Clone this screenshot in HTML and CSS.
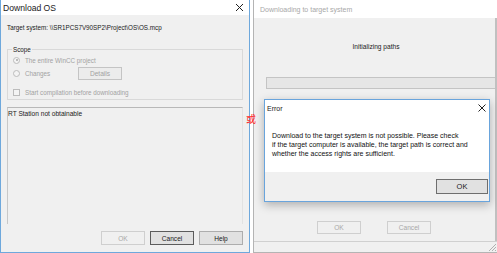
FILE: index.html
```html
<!DOCTYPE html>
<html>
<head>
<meta charset="utf-8">
<link rel="stylesheet" href="styles.css">
</head>
<body>
<div class="screen">
  <div class="dlg-left">
    <div class="titlebar">
      <span class="title">Download OS</span>
      <svg class="close" width="9" height="9" viewBox="0 0 9 9"><path d="M1 1L8 8M8 1L1 8" stroke="#222" stroke-width="1"/></svg>
    </div>
    <div class="left-body">
      <div class="target">Target system: \\SR1PCS7V90SP2\Project\OS\OS.mcp</div>
      <fieldset class="scope">
        <legend>Scope</legend>
        <div class="opt first"><span class="radio checked"></span><span>The entire WinCC project</span></div>
        <div class="opt changes"><span class="radio"></span><span class="lbl">Changes</span><span class="btn details">Details</span></div>
        <div class="opt check"><span class="box"></span><span>Start compilation before downloading</span></div>
      </fieldset>
      <div class="status">RT Station not obtainable</div>
      <div class="buttons">
        <span class="btn disabled">OK</span>
        <span class="btn default">Cancel</span>
        <span class="btn">Help</span>
      </div>
    </div>
  </div>
  <div class="dlg-right">
    <div class="titlebar grey">
      <span class="title">Downloading to target system</span>
    </div>
    <div class="right-body">
      <div class="init">Initializing paths</div>
      <div class="progress"></div>
      <div class="right-buttons">
        <span class="btn disabled">OK</span>
        <span class="btn disabled">Cancel</span>
      </div>
    </div>
    <div class="statusbar"><svg class="grip" width="10" height="10" viewBox="0 0 10 10"><path d="M9 2L2 9M9 5L5 9M9 8L8 9" stroke="#b0b0b0" stroke-width="1"/></svg></div>
  </div>
  <div class="err">
    <div class="err-title">
      <span>Error</span>
      <svg width="8" height="8" viewBox="0 0 8 8"><path d="M0.5 0.5L7.5 7.5M7.5 0.5L0.5 7.5" stroke="#222" stroke-width="1"/></svg>
    </div>
    <div class="err-msg">Download to the target system is not possible. Please check<br>if the target computer is available, the target path is correct and<br>whether the access rights are sufficient.</div>
    <div class="err-foot"><span class="btn okbtn">OK</span></div>
  </div>
  <div class="redmark">或</div>
</div>
</body>
</html>
```
FILE: styles.css
```css
html, body { margin: 0; padding: 0; background: #fff; }
body { font-family: "Liberation Sans", Arial, sans-serif; font-size: 6.3px; color: #1a1a1a; }
.screen { position: relative; width: 497px; height: 253px; display: flex; gap: 3px; overflow: hidden; }

.dlg-left { width: 250px; height: 253px; box-sizing: border-box; border: 1px solid #6ea8dc; border-top: none; background: #f0f0f0; display: flex; flex-direction: column; }
.titlebar { height: 15px; background: #fff; display: flex; align-items: center; justify-content: space-between; padding: 0 5px 0 2px; flex: none; }
.titlebar .title { font-size: 8.6px; color: #222; }
.left-body { padding: 0 6px; flex: 1; display: flex; flex-direction: column; }
.target { margin-top: 8px; height: 9px; line-height: 9px; }
.scope { margin: 14px 0 0 0; padding: 1px 0 1px 5px; border: 1px solid #d9d9d9; }
.scope legend { padding: 0 1px; margin-left: -1px; color: #222; line-height: 7px; height: 7px; }
.opt { display: flex; align-items: center; gap: 5px; color: #a2a2a2; height: 12px; }
.changes { height: 14px; }
.changes .lbl { width: 48px; }
.check { margin-top: 6px; }
.radio { width: 5px; height: 5px; border-radius: 50%; border: 1px solid #bcbcbc; background: #f4f4f4; position: relative; flex: none; }
.radio.checked::after { content: ""; position: absolute; left: 1.5px; top: 1.5px; width: 2px; height: 2px; border-radius: 50%; background: #a8a8a8; }
.box { width: 5px; height: 5px; border: 1px solid #bcbcbc; background: #f4f4f4; flex: none; }
.btn { display: inline-flex; align-items: center; justify-content: center; box-sizing: border-box; width: 44px; height: 14px; background: #e1e1e1; border: 1px solid #adadad; color: #1a1a1a; font-size: 6.6px; }
.details { color: #a2a2a2; border-color: #c4c4c4; background: #ececec; height: 13px; }
.status { margin-top: 7px; height: 117px; flex: none; border-top: 1px solid #b8b8b8; border-left: 1px solid #c8c8c8; border-right: 1px solid #e2e2e2; padding: 2px 0 0 0; box-sizing: border-box; color: #1a1a1a; font-size: 6.6px; }
.buttons { display: flex; justify-content: flex-end; gap: 5px; margin-top: 7px; }
.btn.disabled { background: #f0f0f0; border-color: #cfcfcf; color: #a8a8a8; }
.btn.default { border: 1px solid #5c5c5c; box-shadow: inset 0 0 0 1px #e1e1e1; }

.dlg-right { width: 244px; height: 253px; box-sizing: border-box; border: 1px solid #b4b4b4; border-top: none; border-right: none; background: #f0f0f0; display: flex; flex-direction: column; font-size: 6.6px; }
.titlebar.grey { height: 18px; padding-left: 6px; }
.titlebar.grey .title { color: #a8a8a8; font-size: 7px; }
.right-body { flex: 1; display: flex; flex-direction: column; border-right: 2px solid #c0c0c0; }
.init { text-align: center; margin: 25px 0 0 0; padding-left: 3px; font-size: 6.6px; }
.progress { margin: 27px 0 0 12px; height: 12px; box-sizing: border-box; border: 1px solid #c4c4c4; border-right: none; background: #e6e6e6; }
.right-buttons { display: flex; gap: 26px; margin: 132px 0 0 63px; }
.right-buttons .btn { height: 13px; }
.statusbar { height: 10px; border-top: 1px solid #d0d0d0; background: #f0f0f0; display: flex; justify-content: flex-end; align-items: flex-end; flex: none; }

.err { position: absolute; left: 264px; top: 99px; width: 226px; height: 103px; box-sizing: border-box; border: 1px solid #69a4dc; background: #fff; box-shadow: 0 3px 9px rgba(0,0,0,0.28); display: flex; flex-direction: column; }
.err-title { height: 16px; display: flex; justify-content: space-between; align-items: center; padding: 0 3px 0 2px; font-size: 7px; flex: none; }
.err-msg { padding: 15px 0 0 7px; line-height: 9px; height: 41px; flex: none; color: #111; font-size: 7px; white-space: nowrap; }
.err-foot { flex: 1; background: #f0f0f0; display: flex; justify-content: flex-end; align-items: center; padding-right: 1px; }
.okbtn { width: 52px; height: 15px; border-color: #6e6e6e; font-size: 7.5px; }

.redmark { position: absolute; left: 246px; top: 113px; color: #ff2a2a; font-family: "Noto Sans CJK SC", sans-serif; font-size: 10px; line-height: 11px; }
```
